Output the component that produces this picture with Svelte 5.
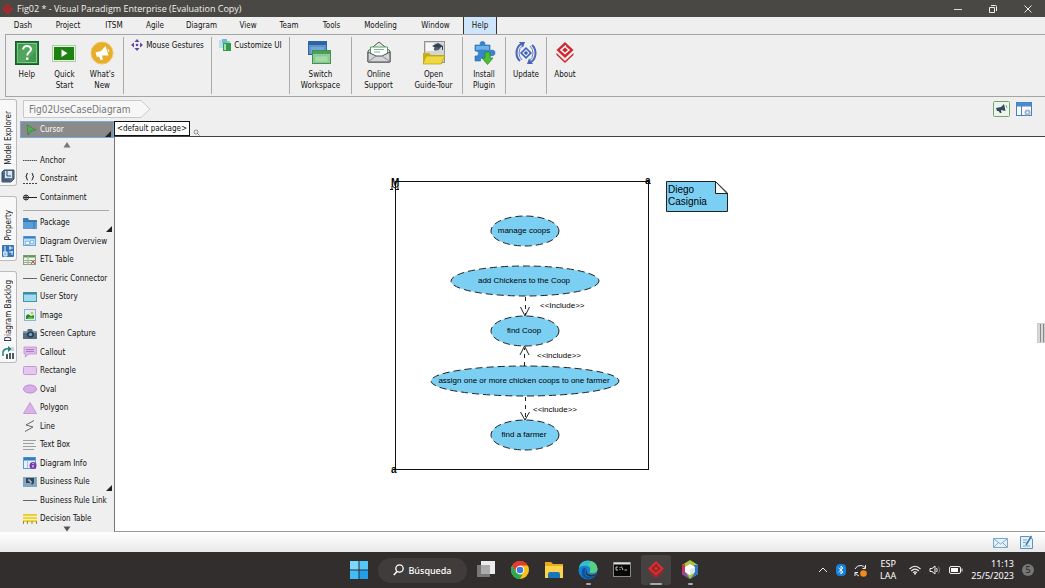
<script>
  const menus = ['Dash', 'Project', 'ITSM', 'Agile', 'Diagram', 'View', 'Team', 'Tools', 'Modeling', 'Window', 'Help'];

  const big = {
    help: '<rect x=".5" y=".5" width="23" height="23" fill="#1f7a31" stroke="#14602a"/><rect x="2.500" y="2.500" width="19" height="19" fill="#3f9a4c" stroke="#8cc793"/><path d="M2 22V9L22 2V9L9 22Z" fill="#63b06c" opacity=".5"/><path d="M8.200 8.500C8.200 4 16 4 16 8.300C16 11 12.200 11.200 12.200 14.500" fill="none" stroke="#fff" stroke-width="2"/><rect x="11" y="16.500" width="2.400" height="2.400" fill="#fff"/>',
    quick: '<rect x=".5" y="4.500" width="23" height="16" fill="#e6f3e2" stroke="#a9cfa0"/><rect x="2" y="6" width="20" height="13" fill="#1d8212"/><path d="M9.500 8.500V16L15.500 12.200Z" fill="#fff"/>',
    news: '<circle cx="12" cy="12" r="11" fill="#e7ae2b" stroke="#f0c867"/><path d="M5.500 11.500L11 10L15.500 5L18.500 14.500L12 14.500L13 18.500L10.500 19L9 15.500L7 16Z" fill="#fff"/><path d="M17.500 8Q19.500 9 18.500 11" stroke="#fff" fill="none"/>',
    workspace: '<rect x=".5" y=".5" width="18" height="13" fill="#5e93cb" stroke="#2e66a4"/><rect x="1" y="1" width="17" height="3" fill="#2c64a6"/><rect x="3" y="6" width="13" height="6" fill="#76a6d6"/><rect x="4.500" y="9.500" width="18" height="13" fill="#93cc99" stroke="#3f9350"/><rect x="5" y="10" width="17" height="3" fill="#4a9f5a"/><rect x="7" y="15" width="13" height="6" fill="#a6d8aa" stroke="#7dbd86" stroke-width=".5"/>',
    support: '<path d="M1 10L12 1L23 10V21H1Z" fill="#e8e8e8" stroke="#555"/><path d="M3.500 14V6H20.500V14L12 17Z" fill="#fff" stroke="#4da565"/><path d="M7 8.500H17M7 11H13" stroke="#79b98a"/><path d="M1 11L9 15H15L23 11V21H1Z" fill="#d4d5d8" stroke="#4c4e53"/><path d="M1.500 20.500L9 15M22.500 20.500L15 15" stroke="#8c8e93"/>',
    tour: '<rect x="2.500" y=".5" width="20" height="21" fill="#d4d5d7" stroke="#919397"/><rect x="4" y="2" width="8" height="8" fill="#f6f6f6"/><path d="M10 5L16 2L21 5L16 8Z" fill="#354250"/><path d="M12 6.500V9Q16 11 19 6.500" fill="#526070"/><path d="M20.500 5V9" stroke="#354250"/><path d="M1 23V12H7L9 14H22L20 23Z" fill="#c9ad15"/><path d="M4 15H23L19 23H1Z" fill="#efd83f" stroke="#b89b14" stroke-width=".7"/>',
    plugin: '<path d="M3 4H8.500Q7 .8 10.500 .6Q14 .8 12.500 4H18V9.500Q23 8 23 12Q23 15.500 18 14.500V20H12.500Q13.500 17 10.500 17Q7.500 17 8.500 20H3V15Q6.500 15.500 6.500 12.500Q6.500 9.500 3 10Z" fill="#3785cf" stroke="#236aad" stroke-width=".6"/><path d="M4 5H17V9Q10 8 4 9Z" fill="#70b1e8"/><path d="M13 11H18V17H21L15.500 23.500L10 17H13Z" fill="#50bd37" stroke="#23851c" stroke-width=".7"/>',
    update: '<g fill="none" stroke="#4a64b9" stroke-width="2"><path d="M7 3Q2.500 6 2.500 12Q2.500 17 6 20"/><path d="M17 21Q21.500 18 21.500 12Q21.500 7 18 4"/><path d="M9 4Q5 7 5 12Q5 16 8 19M15 20Q19 17 19 12Q19 8 16 5" stroke-width=".8"/></g><path d="M5 1H11L9 6.500ZM19 23H13L15 17.500Z" fill="#4a64b9"/><path d="M12 6L18 12L12 18L6 12Z" fill="#3c61b9"/><path d="M12 9L15 12L12 15L9 12Z" fill="none" stroke="#dfe7f8" stroke-width="1.200"/>',
    about: '<path d="M12 1L20.500 9L12 17L3.500 9Z" fill="#d1282f"/><path d="M3.500 12L12 20L20.500 12V14L12 22L3.500 14Z" fill="#d1282f"/><path d="M13 4.500L8 9L12 12.500L16 9L12.500 6" fill="none" stroke="#fff" stroke-width="1.500"/>'
  };

  const groups = [
    { cls: 'g1', items: [['help', 'Help'], ['quick', 'Quick\nStart'], ['news', "What's\nNew"]] },
    { cls: 'g2', small: ['gesture', 'Mouse Gestures'] },
    { cls: 'g3', small: ['custom', 'Customize UI'] },
    { cls: 'g4', items: [['workspace', 'Switch\nWorkspace']] },
    { cls: 'g5', items: [['support', 'Online\nSupport'], ['tour', 'Open\nGuide-Tour']] },
    { cls: 'g6', items: [['plugin', 'Install\nPlugin']] },
    { cls: 'g7', items: [['update', 'Update']] },
    { cls: 'g8', items: [['about', 'About']] }
  ];

  const small = {
    gesture: '<g fill="#68459c"><path d="M6 0L8.500 3H3.500ZM6 12L8.500 9H3.500ZM0 6L3 3.500V8.500ZM12 6L9 3.500V8.500Z"/><circle cx="6" cy="6" r="1.300"/></g>',
    custom: '<rect x="0" y="1" width="5" height="8" fill="#b9dff0"/><rect x="3" y="0" width="5" height="4" fill="#78b8cc"/><rect x="4" y="4" width="8" height="8" fill="#319c48"/><rect x="5" y="5" width="2" height="6" fill="#a6dfae"/><path d="M8 2H11V4H8Z" fill="#8cccd0"/>'
  };

  const line = '<path d="M0 6.500H14" stroke="#666"/>';
  const icons = {
    anchor: '<path d="M0 6.500H14" stroke="#444" stroke-dasharray="1.500 .7"/>',
    constraint: '<path d="M0 10.500H14" stroke="#444" stroke-dasharray="2 1"/><path d="M5 0Q3.500 0 3.700 2Q3.800 3.500 2.700 3.500Q3.800 3.500 3.700 5Q3.500 7 5 7M8.500 0Q10 0 9.800 2Q9.700 3.500 10.800 3.500Q9.700 3.500 9.800 5Q10 7 8.500 7" fill="none" stroke="#222"/>',
    containment: '<circle cx="3" cy="6.500" r="2.500" fill="none" stroke="#222"/><path d="M.5 6.500H14M3 4V9" stroke="#222"/>',
    pkg: '<path d="M0 1H5L6 3H14V12H0Z" fill="#397fbd"/><path d="M0 4H14V12H0Z" fill="#5b9dd4"/><path d="M0 4.500H14M11 5V12" stroke="#3774aa"/>',
    overview: '<rect x=".5" y="1.500" width="12" height="9" fill="#b9dcf8" stroke="#6aa6da"/><path d="M1 2.500H12" stroke="#2e7ecb" stroke-width="2"/><rect x="2.500" y="6.500" width="4" height="3" fill="#fff" stroke="#8fc0ea"/><rect x="7.500" y="5.500" width="3" height="3" fill="#e7f5ff" stroke="#8fc0ea"/>',
    etl: '<rect x=".5" y="1.500" width="12" height="9" fill="#edf4e8" stroke="#8c9e83"/><path d="M1 2.500H12" stroke="#5c9a54" stroke-width="2"/><path d="M1 6.500H12M1 8.500H12M5 2V11" stroke="#9aaf91"/><path d="M8 6L12 10M12 6L8 10" stroke="#c25d70"/>',
    line,
    story: '<rect x=".5" y="1.500" width="13" height="9" fill="#a4dbec" stroke="#4095af"/><path d="M1 2.500H13" stroke="#378aa5" stroke-width="2"/>',
    image: '<rect x="1.500" y=".5" width="11" height="11" fill="#e1f0ff" stroke="#93b2cb"/><path d="M3 10V7L5 5L8 7L11 6V10Z" fill="#25891f"/><path d="M4 10Q6 6 11 9V10Z" fill="#60bf3d"/><circle cx="9" cy="4" r="1.500" fill="#e2c632"/>',
    capture: '<path d="M0 3H4L5 1H9L10 3H14V11H0Z" fill="#526c7d"/><path d="M0 3H14V5H0Z" fill="#8299a7"/><circle cx="7.500" cy="6.500" r="3.300" fill="#263b4d"/><circle cx="7.500" cy="6.500" r="1.700" fill="#75a2c0"/>',
    callout: '<path d="M1 1H13.500V8H6L2 11L3 8H1Z" fill="#debbec" stroke="#bc8dcc" stroke-width=".7"/><path d="M3 3.500H11M3 5.500H11" stroke="#a06ab4" stroke-width=".8"/>',
    rectangle: '<rect x=".5" y="1.500" width="13" height="8" rx="1" fill="#e5c7f1" stroke="#c39ad4"/>',
    oval: '<ellipse cx="7" cy="6" rx="6.500" ry="4" fill="#d7aee8" stroke="#b98ccc"/>',
    polygon: '<path d="M7 .5L13.500 11.500H.5Z" fill="#d9b2ea" stroke="#c49bd6"/>',
    zig: '<path d="M11 .5L3 5L10 7L2 11.500" fill="none" stroke="#666"/>',
    text: '<path d="M0 1.500H13M0 4.500H11M0 7.500H13M0 10.500H11" stroke="#888" stroke-width=".8"/>',
    info: '<rect x=".5" y=".5" width="12" height="11" fill="#e5f1fa" stroke="#5e9bcf"/><path d="M1 2H12" stroke="#347ac7" stroke-width="3"/><path d="M4.500 4V11" stroke="#9dc5e5"/><circle cx="10" cy="8.500" r="3.500" fill="#783bab"/><path d="M10 6V7M10 8V10.500" stroke="#fff"/>',
    rule: '<path d="M0 1H14V11H0Z" fill="#83a5bd"/><path d="M3 2H11V7L9 9L8 7H3Z" fill="#31465c"/><path d="M5 4H7V6H9" fill="none" stroke="#d5e2ed"/>',
    decision: '<path d="M0 1H14V9H0Z" fill="#e6c936"/><path d="M0 3.500H14M0 6.500H14" stroke="#fff3a2" stroke-width="1.500"/><path d="M.5 8V11M4.500 8V11M9 8V11M13.500 8V11" stroke="#9f8a25"/>'
  };

  const tools = [
    ['anchor', 'Anchor'], ['constraint', 'Constraint'], ['containment', 'Containment'], null,
    ['pkg', 'Package', true], ['overview', 'Diagram Overview'], ['etl', 'ETL Table'], ['line', 'Generic Connector'],
    ['story', 'User Story'], ['image', 'Image'], ['capture', 'Screen Capture'], ['callout', 'Callout'],
    ['rectangle', 'Rectangle'], ['oval', 'Oval'], ['polygon', 'Polygon'], ['zig', 'Line'], ['text', 'Text Box'],
    ['info', 'Diagram Info'], ['rule', 'Business Rule', true], ['line', 'Business Rule Link'], ['decision', 'Decision Table']
  ];

  const cases = [
    { x: 525, y: 231, rx: 34, label: 'manage coops' },
    { x: 525, y: 281, rx: 74, label: 'add Chickens to the Coop' },
    { x: 525, y: 331, rx: 34, label: 'find Coop' },
    { x: 525, y: 381, rx: 94, label: 'assign one or more chicken coops to one farmer' },
    { x: 525, y: 435, rx: 34, label: 'find a farmer' }
  ];
</script>

<div class="app">
  <header class="title">
    <svg width="11" height="14" viewBox="0 0 12 14"><path d="M6 1L11 6V8L6 13L1 8V6Z" fill="#a82b30"/><path d="M6 4L8.500 6.500L6 9L3.500 6.500Z" fill="none" stroke="#842327"/></svg>
    <h1>Fig02 * - Visual Paradigm Enterprise (Evaluation Copy)</h1>
    <div class="win">
      <button aria-label="Minimize"><svg width="10" height="10" viewBox="0 0 10 10"><path d="M1 5.500H9" stroke="#ddd"/></svg></button>
      <button aria-label="Restore"><svg width="10" height="10" viewBox="0 0 10 10"><path d="M1.500 3.500H6.500V8.500H1.500ZM3 1.500H7.500Q8.500 1.500 8.500 2.500V7" fill="none" stroke="#eee"/></svg></button>
      <button aria-label="Close"><svg width="10" height="10" viewBox="0 0 10 10"><path d="M1.500 1.500L8.500 8.500M8.500 1.500L1.500 8.500" stroke="#eee"/></svg></button>
    </div>
  </header>

  <nav class="menu">
    {#each menus as m}
      <button class:active={m === 'Help'}>{m}</button>
    {/each}
  </nav>

  <section class="ribbon">
    {#each groups as g}
      <div class="group {g.cls}">
        {#if g.small}
          <button class="wide"><svg width="12" height="12" viewBox="0 0 12 12">{@html small[g.small[0]]}</svg>{g.small[1]}</button>
        {:else}
          {#each g.items as [icon, label]}
            <button class="tall"><svg width="24" height="24" viewBox="0 0 24 24">{@html big[icon]}</svg><span>{label}</span></button>
          {/each}
        {/if}
      </div>
    {/each}
  </section>

  <main>
    <aside class="tabs">
      <button class="t1"><svg width="14" height="14" viewBox="0 0 14 14"><path d="M3 1H13V10L10 13H1V3Z" fill="#5b7591" stroke="#354c65"/><rect x="4" y="2" width="7" height="7" fill="#dbe8f4"/><path d="M6 2V7H10M2 4V11H9" fill="none" stroke="#2f4a68"/></svg><span>Model Explorer</span></button>
      <button class="t2"><svg width="14" height="14" viewBox="0 0 14 14"><rect x="1" y="1" width="12" height="12" rx="1" fill="#3475b8"/><path d="M4 2V8M2.500 8H6V12H3Z" stroke="#e8f3ff" fill="#8dbbe8"/><path d="M8 4H12M8 8H12M9 2V6M11 7V11" stroke="#e8f3ff"/></svg><span>Property</span></button>
      <button class="t3"><svg width="14" height="14" viewBox="0 0 14 14"><path d="M2 10V6Q3 2 8 3" fill="none" stroke="#258577" stroke-width="1.500"/><path d="M7 0L11 3L7 6Z" fill="#258577"/><path d="M5 8H7V13H5ZM8 7H10V13H8ZM11 7H13V13H11Z" fill="#4d5b66"/><path d="M10.500 1H13V5H10.500Z" fill="#ccd3d8"/></svg><span>Diagram Backlog</span></button>
    </aside>

    <div class="work">
      <div class="crumbs">
        <button class="crumb">
          <svg width="128" height="18" viewBox="0 0 128 18"><path d="M.5 .5H118L127 9L118 17.500H.5Z" fill="#f7f7f7" stroke="#c9c9c9"/></svg>
          <span>Fig02UseCaseDiagram</span>
        </button>
        <div class="actions">
          <button aria-label="Announcements"><svg width="17" height="16" viewBox="0 0 17 16"><rect x=".5" y=".5" width="16" height="15" rx="1" fill="#edf4eb" stroke="#74a373"/><path d="M3 7L8 6L11 3L12.500 10L8 9L8.500 12H7L5.500 10H4Z" fill="#34495e"/><path d="M13 4L14 7" stroke="#8b9aaa"/></svg></button>
          <button aria-label="Perspective"><svg width="16" height="15" viewBox="0 0 16 15"><rect x=".5" y=".5" width="15" height="13" fill="#f6faff" stroke="#4681bd"/><path d="M1 2.500H15" stroke="#4a8bd0" stroke-width="4"/><path d="M5.500 4V13" stroke="#4681bd"/><circle cx="11.500" cy="10.500" r="3" fill="#a6b5c3"/><circle cx="11.500" cy="10.500" r="1" fill="#fff"/></svg></button>
        </div>
      </div>

      <div class="editor">
        <div class="palette">
          <button class="cursor"><svg width="12" height="12" viewBox="0 0 12 12"><path d="M2 1L11 6L6 7L3 11Z" fill="#4caf50" stroke="#2b7a37" stroke-width=".6"/></svg>Cursor<i></i></button>
          <button class="arrow" aria-label="Scroll up"><svg width="8" height="6" viewBox="0 0 8 6"><path d="M4 0L7.500 5.500H.5Z" fill="#777"/></svg></button>
          <div class="tools">
            {#each tools as t}
              {#if t}
                <button class="tool"><svg width="14" height="12" viewBox="0 0 14 12">{@html icons[t[0]]}</svg>{t[1]}{#if t[2]}<i></i>{/if}</button>
              {:else}
                <hr />
              {/if}
            {/each}
          </div>
          <button class="arrow down" aria-label="Scroll down"><svg width="8" height="6" viewBox="0 0 8 6"><path d="M4 5.500L7.500 .5H.5Z" fill="#555"/></svg></button>
        </div>

        <div class="board">
          <div class="path">
            <button>&lt;default package&gt;</button>
            <svg width="7" height="7" viewBox="0 0 7 7"><circle cx="3" cy="3" r="2" fill="none" stroke="#777" stroke-width=".8"/><path d="M4.500 4.500L6.500 6.500" stroke="#777"/></svg>
          </div>
          <div class="canvas">
            <svg class="diagram" width="640" height="360" viewBox="115 137 640 360">
              <rect x="395.500" y="181.500" width="253" height="288" fill="none" stroke="#111"/>
              <path d="M666.500 181.500H715.500L727.500 193V211.500H666.500Z" fill="#7bcff3" stroke="#222"/>
              <path d="M715.500 181.500V193.500H727Z" fill="#fff" stroke="#222"/>
              <text class="note" x="668" y="193">Diego</text>
              <text class="note" x="668" y="205">Casignia</text>
              <path d="M390 189.500H393M396 189.500H399M392 190V186L395 188L398 186V190" fill="none" stroke="#111"/>
              <g class="mark">
                <text x="391" y="186">M</text>
                <text x="645" y="184">a</text><text x="391" y="473">a</text>
              </g>
              <g class="flow">
                <path class="dash" d="M525.500 297V315M524.500 366V348M525.500 397V420"/>
                <path d="M520.500 307L525 316L529.500 307M520 355L524.500 346L529 355M520.500 412L525 420L529.500 412"/>
              </g>
              {#each cases as c}
                <ellipse cx={c.x} cy={c.y} rx={c.rx} ry="15"/>
                <text class="case" x={c.x - 1} y={c.y + 2}>{c.label}</text>
              {/each}
              <text class="rel" x="540" y="308">&lt;&lt;Include&gt;&gt;</text>
              <text class="rel" x="537" y="358">&lt;&lt;include&gt;&gt;</text>
              <text class="rel" x="533" y="412">&lt;&lt;include&gt;&gt;</text>
            </svg>
            <div class="grip"></div>
          </div>
        </div>
      </div>
    </div>
  </main>

  <div class="status">
    <svg width="15" height="11" viewBox="0 0 15 11"><path d="M.5 1.500H14.500V10.500H.5Z" fill="#e5f2fb" stroke="#7ba8c8"/><path d="M1 2L7.500 7L14 2M1 10L5 6M14 10L10 6" fill="none" stroke="#7ba8c8"/></svg>
    <svg width="13" height="14" viewBox="0 0 13 14"><path d="M.5 1.500H9L12.500 4V13.500H.5Z" fill="#e4f0f8" stroke="#5f94ba"/><path d="M3 5H7M3 7.500H6M3 11H10" stroke="#79a5c4"/><path d="M11.500 1L6 10" stroke="#3679a9" stroke-width="1.500"/></svg>
  </div>

  <footer class="taskbar">
    <div class="apps">
      <button class="app-btn" aria-label="Start"><svg width="18" height="18" viewBox="0 0 18 18"><path d="M0 0H8.500V8.500H0Z" fill="#7bd8fb"/><path d="M9.500 0H18V8.500H9.500Z" fill="#54c5f8"/><path d="M0 9.500H8.500V18H0Z" fill="#43bdf5"/><path d="M9.500 9.500H18V18H9.500Z" fill="#229de9"/></svg></button>
      <button class="search"><svg width="11" height="12" viewBox="0 0 11 12"><circle cx="6.500" cy="4.500" r="3.700" fill="none" stroke="#fff" stroke-width="1.300"/><path d="M4 7.500L.8 11" stroke="#fff" stroke-width="1.500"/></svg>Búsqueda</button>
      <button class="app-btn" aria-label="Task view"><svg width="20" height="18" viewBox="0 0 20 18"><rect x="5" y="0" width="14" height="13" fill="#ececec"/><rect x="1" y="4" width="13" height="12" fill="#777"/><rect x="5" y="4" width="9" height="9" fill="#aaa"/></svg></button>
      <button class="app-btn" aria-label="Chrome"><svg width="18" height="18" viewBox="0 0 18 18"><circle cx="9" cy="9" r="9" fill="#fbc116"/><path d="M1.200 4.500A9 9 0 0 1 16.800 4.500H9L5 11Z" fill="#e33b2e"/><path d="M1.200 4.500L5.200 11.300L9 13.500L11.500 13.500L9 18A9 9 0 0 1 1.200 4.500Z" fill="#2da94f"/><circle cx="9" cy="9" r="4.300" fill="#fff"/><circle cx="9" cy="9" r="3.300" fill="#3979e8"/></svg></button>
      <button class="app-btn" aria-label="Files"><svg width="20" height="18" viewBox="0 0 20 18"><path d="M1 1H7L9 3H19V17H1Z" fill="#e9a91e"/><path d="M1 5H19V17H1Z" fill="#fbd34d"/><path d="M4 17V13Q4 11 6 11H14Q16 11 16 13V17Z" fill="#1b75bd"/></svg></button>
      <button class="app-btn dot" aria-label="Edge"><svg width="20" height="20" viewBox="0 0 20 20"><circle cx="10" cy="10" r="9.500" fill="#1780cf"/><path d="M1 8Q2 .5 10 .5Q19 1 19.500 9Q19 13 14 13Q11 13 12 11Q13 7 9 6Q4 5 1 8Z" fill="#35bdc9"/><path d="M13 1Q19 3 19.500 9Q19 13 14 13Q11 13 12 11Q14 7 10 5Z" fill="#58cf83"/><path d="M8 8Q5 15 11 17Q15 18 18 15Q15 20 9 19Q2 17 4 10Q5 7 8 8Z" fill="#0c559f"/><path d="M9 9Q7 14 13 15Q17 15 19 13L18 15Q14 18 10 16Q6 13 9 9Z" fill="#322e2e"/></svg></button>
      <button class="app-btn" aria-label="Terminal"><svg width="18" height="16" viewBox="0 0 18 16"><rect x=".5" y=".5" width="17" height="14" fill="#080808" stroke="#888"/><path d="M1 1.500H17" stroke="#ddd" stroke-width="2"/><path d="M5 5H3V8H5M7 5V6M7 7V8M8.500 4.500L10 8M11.500 8H14" fill="none" stroke="#eee" stroke-width=".8"/></svg></button>
      <button class="app-btn current" aria-label="Visual Paradigm"><svg width="18" height="20" viewBox="0 0 18 20"><path d="M9 1L17 8.500L9 16L1 8.500Z" fill="#d52c31"/><path d="M2 10L9 16L16 10V12L9 18.500L2 12Z" fill="#a32428"/><path d="M10 4.500L5.500 8.500L9 11.500L12.500 8.500L9.500 6" fill="none" stroke="#7c2528" stroke-width="1.300"/></svg></button>
      <button class="app-btn dot" aria-label="NetBeans"><svg width="18" height="20" viewBox="0 0 18 20"><path d="M9 0L17 5V14L9 19L1 14V5Z" fill="#a9c83d"/><path d="M1 5L4 4V15L9 19L1 14Z" fill="#c9345c"/><path d="M17 5L13 5V14L9 19L17 14Z" fill="#2d77c4"/><path d="M1 14L4 11L9 19Z" fill="#8a4bb0"/><path d="M9 4L14 7V12L9 15L4 12V7Z" fill="#fff"/><path d="M9 9.500L14 7V12L9 15Z" fill="#d9e7f2"/></svg></button>
    </div>
    <div class="tray">
      <svg width="10" height="6" viewBox="0 0 10 6"><path d="M1 5L5 1L9 5" fill="none" stroke="#eee"/></svg>
      <svg width="10" height="12" viewBox="0 0 10 12"><rect width="10" height="12" rx="4" fill="#1681dc"/><path d="M2.500 3.800L7 8L5 10V2L7 4L2.500 8.200" fill="none" stroke="#fff" stroke-width=".9"/></svg>
      <svg width="13" height="13" viewBox="0 0 13 13"><path d="M1 5Q3 1 7 1.500Q10 2 11.500 4M11.500 1V4.500H8.500M1 8Q2 11 5 12M1 12V8.500H4" fill="none" stroke="#eee"/><circle cx="9.500" cy="9.500" r="3.300" fill="#f28c16"/></svg>
      <div class="lang"><span>ESP</span><span>LAA</span></div>
      <svg width="12" height="10" viewBox="0 0 12 10"><path d="M.5 4Q6 -1.500 11.500 4M2.200 6Q6 2.200 9.800 6M4 7.700Q6 6 8 7.700" fill="none" stroke="#eee" stroke-width="1.100"/><circle cx="6" cy="8.700" r="1" fill="#eee"/></svg>
      <svg width="12" height="10" viewBox="0 0 12 10"><path d="M1 3.500H3L6 1V9L3 6.500H1Z" fill="none" stroke="#eee"/><path d="M7.500 3Q9 5 7.500 7" fill="none" stroke="#eee"/><path d="M9.500 1.500Q12 5 9.500 8.500" fill="none" stroke="#777"/></svg>
      <svg width="14" height="8" viewBox="0 0 14 8"><rect x=".5" y=".5" width="11" height="7" rx="1.500" fill="none" stroke="#eee"/><rect x="2" y="2" width="7" height="4" fill="#fff"/><path d="M13 2.500V5.500" stroke="#eee"/></svg>
      <div class="clock"><span>11:13</span><span>25/5/2023</span></div>
      <span class="badge">5</span>
    </div>
  </footer>
</div>

<style>
  :global(body) { margin: 0; }
  .app {
    min-height: 100vh; display: flex; flex-direction: column; background: #efefef; color: #111;
    font: 8px/11px "DejaVu Sans Condensed", "DejaVu Sans", sans-serif; font-stretch: condensed; overflow: hidden;
  }
  button { font: inherit; color: inherit; border: 0; background: none; padding: 0; margin: 0; }
  svg { display: block; flex: none; }
  .title { height: 17px; background: #4a4845; color: #f1f1f1; display: flex; align-items: center; gap: 4px; padding-left: 2px; box-sizing: border-box; }
  h1 { font: 9px/16px "Open Sans", "Noto Sans", sans-serif; margin: 0; flex: 1; }
  .win { display: flex; align-items: center; }
  .win button { width: 35px; height: 14px; display: grid; place-items: center; }
  .menu { display: grid; grid-template-columns: 40px 50px 42px 40px 53px 40px 42px 43px 55px 55px 34px; height: 17px; padding-left: 3px; }
  .menu button { white-space: nowrap; }
  .menu .active { background: #cfe5fb; border: solid #333; border-width: 0 1px; }
  .ribbon { display: flex; margin-left: 5px; padding: 2px 0; border: solid #a5a5a5; border-width: 1px 0 1px 1px; height: 57px; }
  .group { display: flex; box-sizing: border-box; border-right: 1px solid #aaa; justify-content: space-around; align-items: flex-start; padding-top: 4px; }
  .g1 { width: 118px; padding-left: 2px; padding-right: 2px; }
  .g2 { width: 88px; padding-top: 2px; }
  .g3 { width: 78px; padding-top: 2px; }
  .g4 { width: 62px; }
  .g5 { width: 111px; }
  .g6 { width: 43px; }
  .g7 { width: 41px; }
  .g8 { width: 36px; border: 0; }
  .tall { display: flex; flex-direction: column; align-items: center; gap: 4px; min-width: 34px; text-align: center; white-space: pre; }
  .wide { display: flex; align-items: center; gap: 3px; white-space: nowrap; }
  main { flex: 1; display: flex; min-height: 0; }
  .tabs { width: 17px; display: flex; flex-direction: column; gap: 10px; padding-top: 2px; }
  .tabs button { box-sizing: border-box; display: flex; flex-direction: column-reverse; align-items: center; gap: 4px; border: 1px solid #bbb; border-left: 0; border-radius: 0 3px 3px 0; background: #f8f8f8; padding: 2px 0; justify-content: flex-start; }
  .tabs span { writing-mode: vertical-rl; transform: rotate(180deg); white-space: nowrap; }
  .t1 { height: 87px; }
  .t2 { height: 65px; }
  .t3 { height: 92px; }
  .work { flex: 1; display: flex; flex-direction: column; min-width: 0; padding-left: 3px; }
  .crumbs { display: flex; justify-content: space-between; align-items: center; height: 24px; padding: 0 13px 0 3px; }
  .crumb { display: grid; align-items: center; font-size: 10px; color: #777; text-align: left; }
  .crumb > * { grid-area: 1 / 1; }
  .crumb span { padding-left: 6px; }
  .actions { display: flex; gap: 6px; align-items: center; }
  .editor { flex: 1; display: flex; }
  .palette { width: 94px; display: flex; flex-direction: column; }
  .palette button { position: relative; display: flex; align-items: center; white-space: nowrap; }
  .palette i { position: absolute; right: 2px; bottom: 0; width: 6px; height: 6px; background: #222; clip-path: polygon(100% 0, 100% 100%, 0 100%); }
  .palette .cursor { height: 17px; box-sizing: border-box; border: 1px solid #77a8d6; background: #8a8a8a; color: #fff; padding-left: 4px; gap: 3px; }
  .palette .arrow { height: 13px; justify-content: center; }
  .palette .down { height: 6px; margin-top: -2px; }
  .tools { flex: 1; display: flex; flex-direction: column; }
  .tool { flex: 1; padding-left: 3px; gap: 3px; }
  hr { height: 1px; margin: 3px 5px 3px 3px; border: 0; background: #aaa; }
  .board { flex: 1; display: flex; flex-direction: column; min-width: 0; }
  .path { display: flex; align-items: flex-end; gap: 3px; height: 15px; border-bottom: 1px solid #444; }
  .path button { height: 15px; border: 1px solid #111; background: #fff; padding: 0 2px; box-sizing: border-box; white-space: nowrap; }
  .canvas { flex: 1; position: relative; background: #fff; border-left: 1px solid #777; border-bottom: 1px solid #999; overflow: hidden; }
  .grip { position: absolute; right: 0; top: 186px; width: 8px; height: 20px; background: repeating-linear-gradient(90deg, #d8d8d8 0 2px, #888 2px 3px); border: 1px solid #ccc; box-sizing: border-box; }
  .diagram { font-family: "Liberation Sans", Arial, sans-serif; font-stretch: normal; font-size: 8px; }
  .note { font-size: 10px; }
  .mark { font-size: 10px; font-weight: bold; }
  .case { text-anchor: middle; }
  ellipse { fill: #7bcff3; stroke: #222; stroke-dasharray: 7 4; }
  .flow { fill: none; stroke: #222; }
  .dash { stroke-dasharray: 4 4; }
  .status { height: 20px; background: linear-gradient(#fff, #e9e9e9); display: flex; justify-content: flex-end; align-items: center; gap: 12px; padding-right: 12px; }
  .taskbar { height: 36px; background: #322e2e; color: #fff; display: grid; grid-template-columns: 1fr auto 1fr; align-items: center; font-family: "Noto Sans", sans-serif; font-size: 9px; font-stretch: normal; }
  .apps { grid-column: 2; display: flex; align-items: center; gap: 4px; padding-left: 4px; }
  .app-btn { width: 30px; height: 30px; display: grid; place-items: center; position: relative; }
  .search { display: flex; align-items: center; gap: 4px; justify-content: center; width: 89px; height: 25px; border-radius: 13px; background: #403c3c; font-weight: 500; }
  .current { background: #464242; border-radius: 3px; }
  .dot::after, .current::after { content: ""; position: absolute; bottom: 0; width: 5px; height: 2px; border-radius: 1px; background: #aaa; }
  .current::after { width: 12px; }
  .tray { display: flex; align-items: center; justify-content: flex-end; gap: 8px; padding-right: 11px; }
  .lang, .clock { display: flex; flex-direction: column; line-height: 12px; text-align: center; }
  .lang { padding: 0 5px; }
  .clock { text-align: right; }
  .badge { width: 12px; height: 12px; border-radius: 6px; background: #777; color: #222; text-align: center; line-height: 12px; }
</style>
